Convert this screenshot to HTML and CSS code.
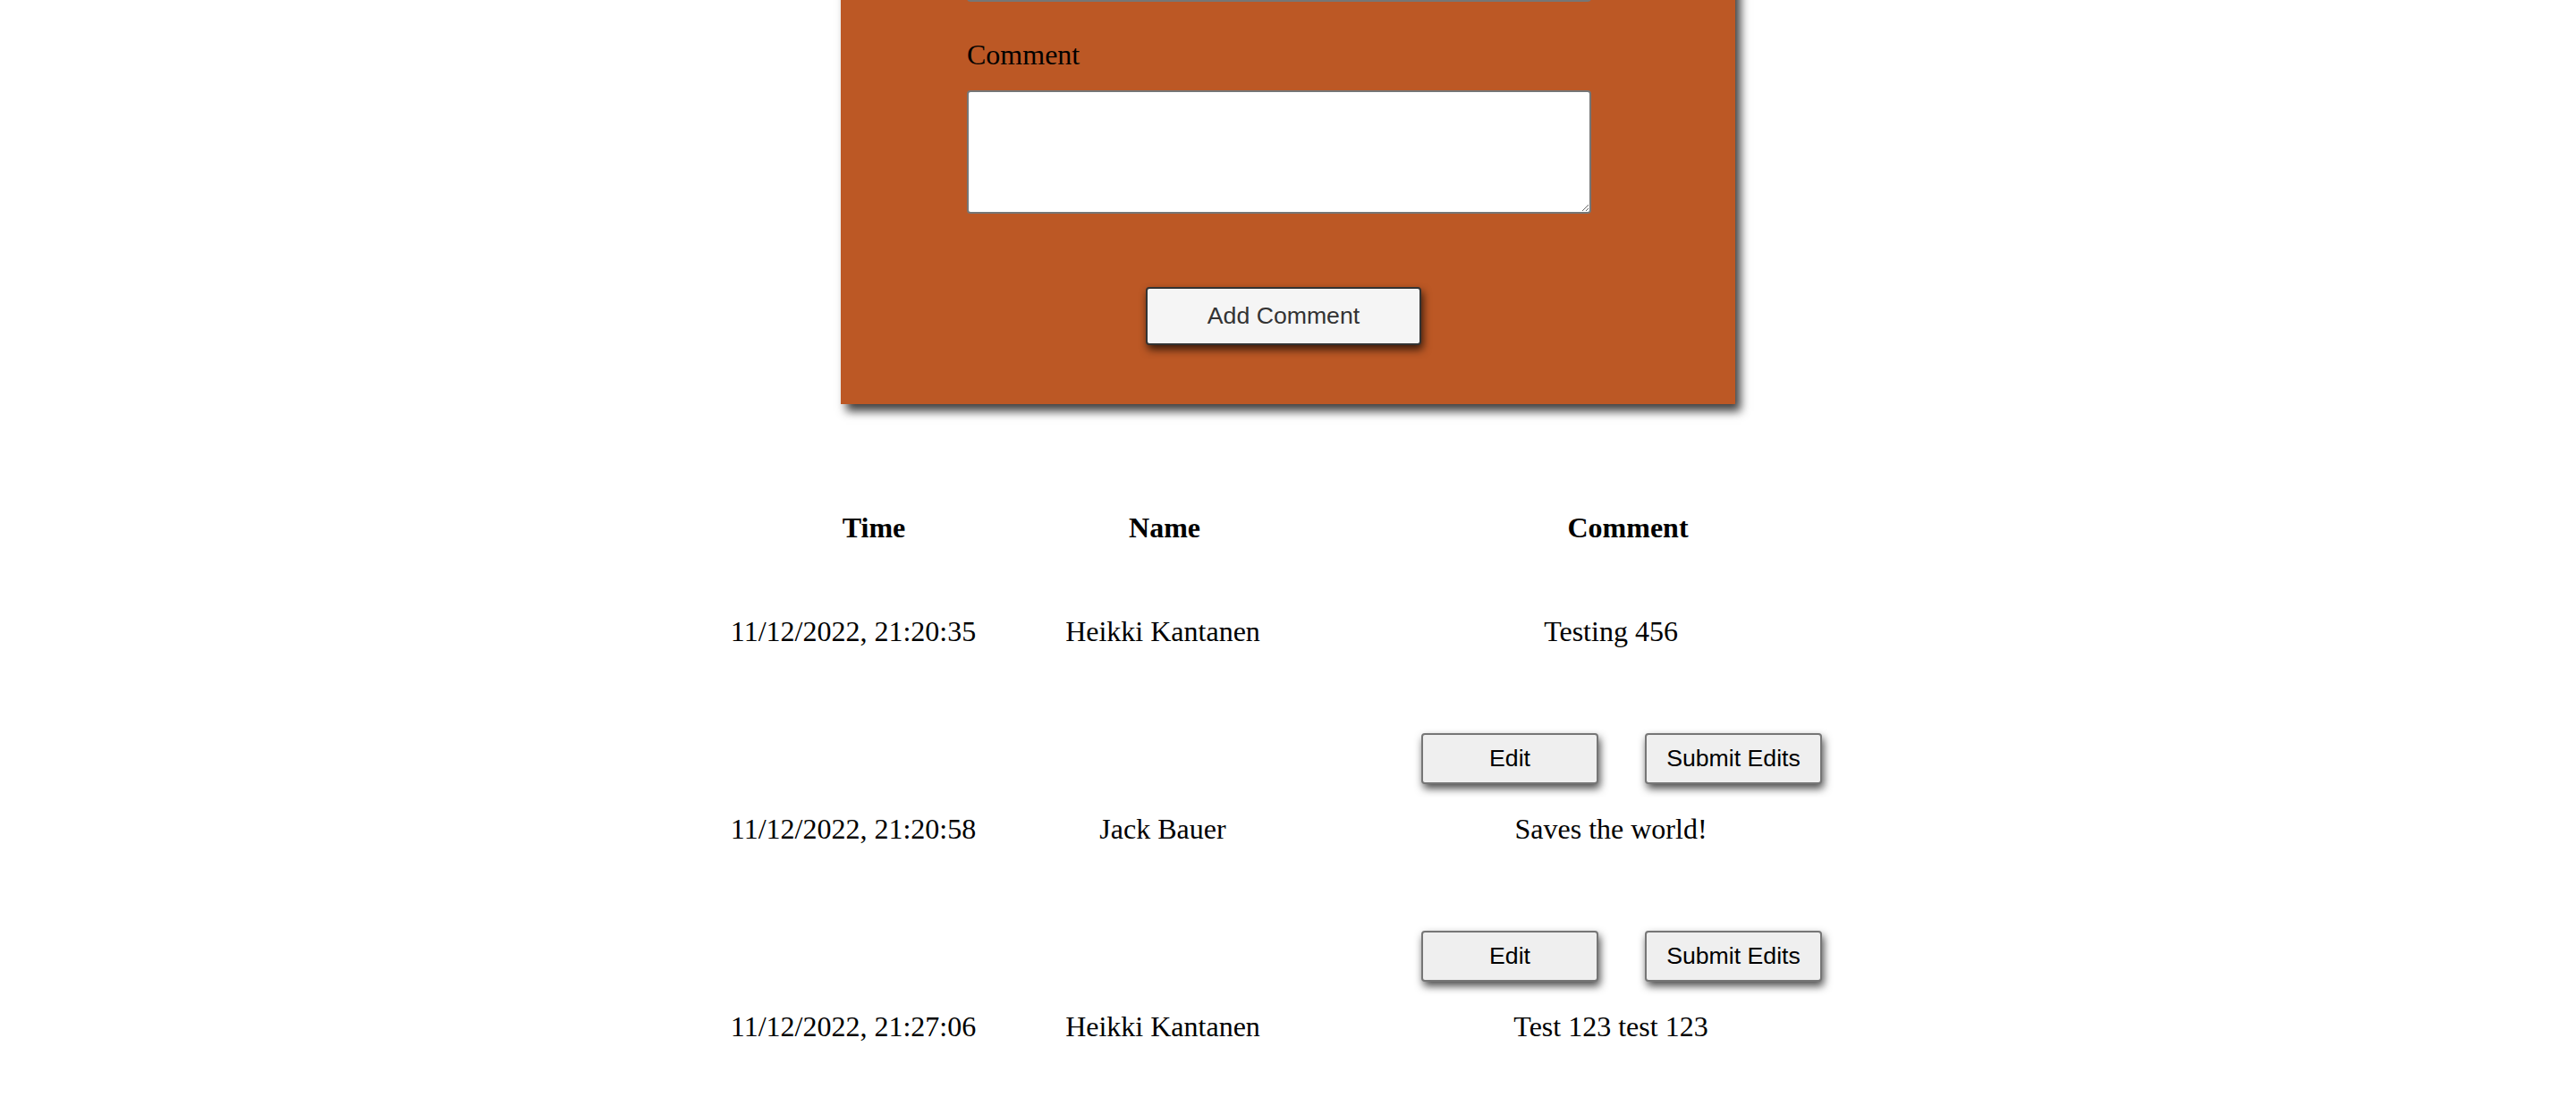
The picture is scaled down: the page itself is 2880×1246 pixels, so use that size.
FILE: index.html
```html
<!DOCTYPE html>
<html lang="en">
<head>
<meta charset="utf-8">
<title>Comments</title>
<link rel="stylesheet" href="styles.css">
</head>
<body>
<main class="page">
  <form class="panel">
    <input id="name" class="field-input" type="text" aria-label="Name">
    <label class="field-label" for="comment">Comment</label>
    <textarea id="comment" class="field-area"></textarea>
    <button class="add-btn" type="button">Add Comment</button>
  </form>

  <section class="comments">
    <div class="thead">
      <div class="th">Time</div>
      <div class="th">Name</div>
      <div class="th th-comment">Comment</div>
    </div>

    <div class="row">
      <div class="cell">11/12/2022, 21:20:35</div>
      <div class="cell">Heikki Kantanen</div>
      <div class="cell cell-comment">Testing 456</div>
      <div class="actions">
        <button class="act-btn" type="button">Edit</button>
        <button class="act-btn" type="button">Submit Edits</button>
      </div>
    </div>

    <div class="row">
      <div class="cell">11/12/2022, 21:20:58</div>
      <div class="cell">Jack Bauer</div>
      <div class="cell cell-comment">Saves the world!</div>
      <div class="actions">
        <button class="act-btn" type="button">Edit</button>
        <button class="act-btn" type="button">Submit Edits</button>
      </div>
    </div>

    <div class="row">
      <div class="cell">11/12/2022, 21:27:06</div>
      <div class="cell">Heikki Kantanen</div>
      <div class="cell cell-comment">Test 123 test 123</div>
    </div>
  </section>
</main>
</body>
</html>
```

FILE: styles.css
```css
html, body {
  margin: 0;
  padding: 0;
  background: #ffffff;
}

body {
  font-family: "Liberation Serif", "Times New Roman", serif;
  color: #000000;
  overflow: hidden;
}

.page {
  display: flex;
  flex-direction: column;
}

/* ---------- form panel ---------- */
.panel {
  width: 1000px;
  box-sizing: border-box;
  margin: -89px auto 0;
  padding: 40px 151px 66px 141px;
  background: #bc5825;
  box-shadow: 6px 8px 10px rgba(0, 0, 0, 0.75);
  display: flex;
  flex-direction: column;
}

.field-label {
  display: block;
  font-size: 32px;
  line-height: 36px;
  margin-bottom: 22px;
}

.field-input,
.field-area {
  display: block;
  width: 698px;
  box-sizing: border-box;
  border: 2px solid #767676;
  border-radius: 4px;
  background: #ffffff;
  padding: 2px 4px;
  font-family: "Liberation Sans", Arial, sans-serif;
  font-size: 26px;
}

.field-input {
  height: 51px;
  margin: 0 0 41px;
}

.field-area {
  height: 138px;
  margin: 0 0 82px;
}

.add-btn {
  align-self: center;
  width: 308px;
  height: 65px;
  box-sizing: border-box;
  border: 2px solid #333333;
  border-radius: 4px;
  background: #f5f5f5;
  color: #333333;
  font-family: "Liberation Sans", Arial, sans-serif;
  font-size: 26.67px;
  padding: 0;
  box-shadow: 2px 5px 10px rgba(0, 0, 0, 0.7);
}

/* ---------- comments table ---------- */
.comments {
  width: 1320px;
  margin: 120px auto 0;
  font-size: 32px;
  line-height: 36px;
}

.thead {
  display: grid;
  grid-template-columns: 394px 256px 1fr;
  margin-bottom: 80px;
}

.th {
  font-weight: bold;
  text-align: center;
}

.th-comment {
  padding-left: 110px;
}

.row {
  display: grid;
  grid-template-columns: 348px 344px 1fr;
}

.cell {
  text-align: center;
  white-space: nowrap;
}

.cell-comment {
  padding-left: 30px;
}

.actions {
  grid-column: 3;
  display: flex;
  gap: 52px;
  margin: 96px 0 32px;
  padding-left: 117px;
}

.act-btn {
  width: 198px;
  height: 57px;
  box-sizing: border-box;
  border: 2px solid #767676;
  border-radius: 4px;
  background: #efefef;
  color: #000000;
  font-family: "Liberation Sans", Arial, sans-serif;
  font-size: 26.67px;
  padding: 0;
  box-shadow: 2px 5px 10px rgba(0, 0, 0, 0.7);
}
```
